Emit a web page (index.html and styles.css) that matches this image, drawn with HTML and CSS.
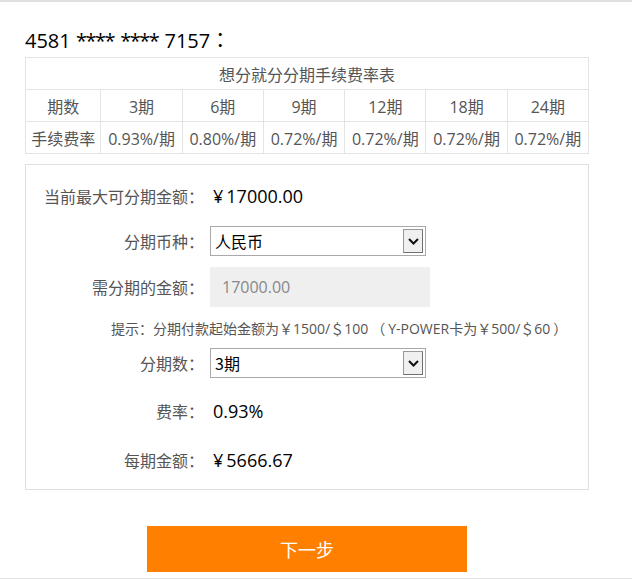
FILE: index.html
```html
<!DOCTYPE html>
<html lang="zh-CN">
<head>
<meta charset="utf-8">
<title>分期</title>
<link rel="stylesheet" href="styles.css">
</head>
<body>
<div class="topbar"></div>
<div class="page">
  <h2 class="card">4581 <span class="mask">****</span> <span class="mask">****</span> 7157<span class="colon">：</span></h2>
  <table class="rates">
    <tr><td colspan="7">想分就分分期手续费率表</td></tr>
    <tr><td class="first">期数</td><td>3期</td><td>6期</td><td>9期</td><td>12期</td><td>18期</td><td>24期</td></tr>
    <tr><td class="first">手续费率</td><td>0.93%/期</td><td>0.80%/期</td><td>0.72%/期</td><td>0.72%/期</td><td>0.72%/期</td><td>0.72%/期</td></tr>
  </table>

  <div class="form">
    <div class="row r1">
      <span class="label">当前最大可分期金额<span class="colon">：</span></span>
      <span class="value"><span class="yen">¥</span>17000.00</span>
    </div>
    <div class="row r2">
      <span class="label">分期币种<span class="colon">：</span></span>
      <div class="select"><span class="sel-text">人民币</span><span class="arrow"><svg width="11" height="7" viewBox="0 0 11 7"><path d="M1 1 L5.5 5.5 L10 1" fill="none" stroke="#111" stroke-width="2"/></svg></span></div>
    </div>
    <div class="row r3">
      <span class="label">需分期的金额<span class="colon">：</span></span>
      <div class="input">17000.00</div>
    </div>
    <div class="hint">提示<span class="colon">：</span>分期付款起始金额为<span class="tc">￥</span>1500/<span class="tc">＄</span>100<span class="tc paren">（</span>Y-POWER卡为<span class="tc">￥</span>500/<span class="tc">＄</span>60<span class="tc paren">）</span></div>
    <div class="row r4">
      <span class="label">分期数<span class="colon">：</span></span>
      <div class="select"><span class="sel-text">3期</span><span class="arrow"><svg width="11" height="7" viewBox="0 0 11 7"><path d="M1 1 L5.5 5.5 L10 1" fill="none" stroke="#111" stroke-width="2"/></svg></span></div>
    </div>
    <div class="row r5">
      <span class="label">费率<span class="colon">：</span></span>
      <span class="value">0.93%</span>
    </div>
    <div class="row r6">
      <span class="label">每期金额<span class="colon">：</span></span>
      <span class="value"><span class="yen">¥</span>5666.67</span>
    </div>
  </div>

  <div class="actions"><button class="next">下一步</button></div>
</div>
<div class="bottombar"></div>
</body>
</html>
```
FILE: styles.css
```css
html, body {
  margin: 0;
  padding: 0;
  background: #fff;
  font-family: "Open Sans", "Noto Sans CJK SC", sans-serif;
  overflow: hidden;
  text-spacing-trim: space-all;
}
.topbar {
  height: 2px;
  background: #e0e0e0;
}
.bottombar {
  height: 4px;
  background: #e0e0e0;
}
.page {
  padding: 0 0 0 25px;
  width: 564px;
}
.colon, .tc {
  font-family: "Noto Sans CJK TC", sans-serif;
  text-spacing-trim: space-all;
}
.paren {
  margin: 0 3px;
}
.card {
  margin: 0;
  padding-top: 24px;
  height: 31px;
  font-size: 20px;
  font-weight: normal;
  color: #000;
  line-height: 28px;
  font-family: "Open Sans", "Noto Sans CJK SC", sans-serif;
}
.mask {
  letter-spacing: -1.5px;
  margin-right: 1px;
}
.rates {
  width: 564px;
  border-collapse: collapse;
  color: #555;
  font-size: 16px;
  font-family: "Open Sans", "Noto Sans CJK SC", sans-serif;
}
.rates td {
  border: 1px solid #e3e3e3;
  height: 31px;
  padding: 0;
  text-align: center;
  width: 81px;
  white-space: nowrap;
}
.rates td.first {
  width: 75px;
}
.form {
  margin-top: 10px;
  border: 1px solid #e0e0e0;
  padding: 16px 0 14px 0;
  font-family: "Noto Sans CJK SC", sans-serif;
}
.row {
  display: flex;
  align-items: center;
  height: 30px;
}
.label {
  width: 178px;
  text-align: right;
  font-size: 16px;
  color: #555;
  margin-right: 6px;
  flex: none;
}
.value {
  font-size: 18px;
  color: #000;
  font-family: "Open Sans", "Noto Sans CJK SC", sans-serif;
  margin-left: 3px;
}
.yen {
  margin-right: 3px;
}
.r2 { margin-top: 15px; }
.r3 { margin-top: 11px; height: 40px; }
.r4 { margin-top: 11px; }
.r5 { margin-top: 18px; }
.r6 { margin-top: 19px; }
.select {
  position: relative;
  box-sizing: border-box;
  width: 216px;
  height: 30px;
  border: 1px solid #a9a9a9;
  display: flex;
  align-items: center;
  padding-left: 4px;
  font-size: 16px;
  color: #000;
}
.arrow {
  position: absolute;
  right: 2px;
  top: 2px;
  box-sizing: border-box;
  width: 20px;
  height: 24px;
  background: #f0f0f0;
  border: 1px solid #999;
  border-right-color: #707070;
  border-bottom-color: #707070;
  display: flex;
  align-items: center;
  justify-content: center;
}
.input {
  box-sizing: border-box;
  width: 220px;
  height: 40px;
  background: #efefef;
  color: #888;
  font-size: 16px;
  padding-left: 12px;
  display: flex;
  align-items: center;
  font-family: "Open Sans", "Noto Sans CJK SC", sans-serif;
}
.hint {
  margin-top: 12px;
  margin-left: 85px;
  height: 18px;
  line-height: 18px;
  font-size: 14px;
  color: #555;
  white-space: nowrap;
  font-family: "Open Sans", "Noto Sans CJK SC", sans-serif;
}
.actions {
  display: flex;
  justify-content: center;
  padding: 36px 0 6px 0;
}
.next {
  width: 320px;
  height: 46px;
  border: none;
  background: #ff7f00;
  color: #fff;
  font-size: 18px;
  font-family: "Noto Sans CJK SC", sans-serif;
  padding: 0;
}
```
